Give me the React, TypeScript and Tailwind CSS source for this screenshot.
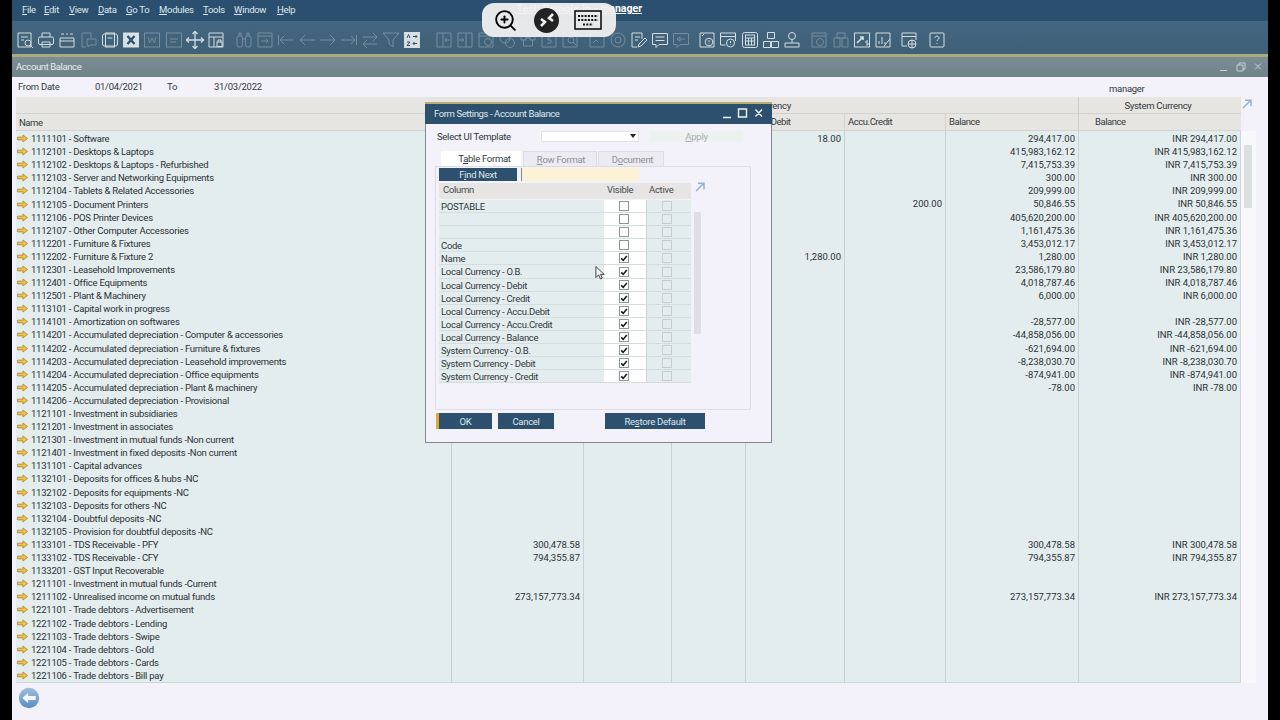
import React from "react";
import { ZoomIn } from "lucide-react";

type R = { n: string; d?: string; c?: string; b?: string; o?: string };
const rows: R[] = [
  { n: "1111101 - Software", d: "18.00", b: "294,417.00" },
  { n: "1112101 - Desktops & Laptops", b: "415,983,162.12" },
  { n: "1112102 - Desktops & Laptops - Refurbished", b: "7,415,753.39" },
  { n: "1112103 - Server and Networking Equipments", b: "300.00" },
  { n: "1112104 - Tablets & Related Accessories", b: "209,999.00" },
  { n: "1112105 - Document Printers", c: "200.00", b: "50,846.55" },
  { n: "1112106 - POS Printer Devices", b: "405,620,200.00" },
  { n: "1112107 - Other Computer Accessories", b: "1,161,475.36" },
  { n: "1112201 - Furniture & Fixtures", b: "3,453,012.17" },
  { n: "1112202 - Furniture & Fixture 2", d: "1,280.00", b: "1,280.00" },
  { n: "1112301 - Leasehold Improvements", b: "23,586,179.80" },
  { n: "1112401 - Office Equipments", b: "4,018,787.46" },
  { n: "1112501 - Plant & Machinery", b: "6,000.00" },
  { n: "1113101 - Capital work in progress" },
  { n: "1114101 - Amortization on softwares", b: "-28,577.00" },
  { n: "1114201 - Accumulated depreciation - Computer & accessories", b: "-44,858,056.00" },
  { n: "1114202 - Accumulated depreciation - Furniture & fixtures", b: "-621,694.00" },
  { n: "1114203 - Accumulated depreciation - Leasehold improvements", b: "-8,238,030.70" },
  { n: "1114204 - Accumulated depreciation - Office equipments", b: "-874,941.00" },
  { n: "1114205 - Accumulated depreciation - Plant & machinery", b: "-78.00" },
  { n: "1114206 - Accumulated depreciation - Provisional" },
  { n: "1121101 - Investment in subsidiaries" },
  { n: "1121201 - Investment in associates" },
  { n: "1121301 - Investment in mutual funds -Non current" },
  { n: "1121401 - Investment in fixed deposits -Non current" },
  { n: "1131101 - Capital advances" },
  { n: "1132101 - Deposits for offices & hubs -NC" },
  { n: "1132102 - Deposits for equipments -NC" },
  { n: "1132103 - Deposits for others -NC" },
  { n: "1132104 - Doubtful deposits -NC" },
  { n: "1132105 - Provision for doubtful deposits -NC" },
  { n: "1133101 - TDS Receivable - PFY", o: "300,478.58", b: "300,478.58" },
  { n: "1133102 - TDS Receivable - CFY", o: "794,355.87", b: "794,355.87" },
  { n: "1133201 - GST Input Recoverable" },
  { n: "1211101 - Investment in mutual funds -Current" },
  { n: "1211102 - Unrealised income on mutual funds", o: "273,157,773.34", b: "273,157,773.34" },
  { n: "1221101 - Trade debtors - Advertisement" },
  { n: "1221102 - Trade debtors - Lending" },
  { n: "1221103 - Trade debtors - Swipe" },
  { n: "1221104 - Trade debtors - Gold" },
  { n: "1221105 - Trade debtors - Cards" },
  { n: "1221106 - Trade debtors - Bill pay" },
];

const settings: [string, boolean][] = [
  ["POSTABLE", false],
  ["", false],
  ["", false],
  ["Code", false],
  ["Name", true],
  ["Local Currency - O.B.", true],
  ["Local Currency - Debit", true],
  ["Local Currency - Credit", true],
  ["Local Currency - Accu.Debit", true],
  ["Local Currency - Accu.Credit", true],
  ["Local Currency - Balance", true],
  ["System Currency - O.B.", true],
  ["System Currency - Debit", true],
  ["System Currency - Credit", true],
];

const cols = "grid grid-cols-[435px_132px_88px_74px_99px_101px_133px_163px]";

const glyphs: Record<string, React.ReactNode> = {
  preview: <><path d="M3 3h13v14H3z" /><path d="M6 7h7M6 10h3" /><circle cx="13" cy="13" r="3" /><path d="M15 15l3 3" /></>,
  print: <><path d="M6 7V3h8v4" /><rect x="2.5" y="7" width="15" height="7.5" rx="1.5" /><path d="M6 12h8v5H6z" /></>,
  cal: <><path d="M3 8h14v9H3z" /><path d="M3 11h14M4 4h3M13 4h3M9 4h2" /></>,
  chat: <><path d="M4 17V3h9v5M4 17h4" /><path d="M9 9h9v6h-6l-2 2v-2H9z" /></>,
  window: <><rect x="2.5" y="4" width="15" height="12" rx="2" /><rect x="5.5" y="3" width="9" height="14" /><path d="M7.5 8h5" /></>,
  excel: <><rect x="2.5" y="3" width="15" height="14" fill="#f4f7f8" /><path d="M6.5 6l7 8M13.5 6l-7 8" stroke="#2d4f66" strokeWidth="2.4" /></>,
  word: <><rect x="2.5" y="3" width="15" height="14" /><path d="M6 7l1.5 6 2.5-5 2.5 5L14 7" /></>,
  pdf: <><rect x="2.5" y="3" width="15" height="14" /><path d="M6 9h8M6 12h6" /></>,
  move: <><path d="M10 1.5v17M1.5 10h17" strokeWidth="1.3" /><path d="M7.5 4L10 1.5 12.5 4M7.5 16l2.5 2.5 2.5-2.5M4 7.5L1.5 10 4 12.5M16 7.5l2.500 2.500-2.500 2.500" strokeWidth="1.3" /></>,
  lock: <><path d="M3 3h14v14H3zM3 7h14M8 7v10" /><rect x="11" y="12" width="5" height="4.500" /><path d="M12 12v-2h3v2" /></>,
  binoc: <><rect x="3" y="6" width="5.500" height="11" rx="2" /><rect x="11.500" y="6" width="5.500" height="11" rx="2" /><path d="M8.500 9h3M5 6V3h2v3M13 6V3h2v3" /></>,
  import: <><path d="M3 3h14v14H3zM3 6h14" /><path d="M6 11h7M11 9l2 2-2 2" /></>,
  first: <><path d="M2.500 5v10M18 10H4M8 6l-4 4 4 4" /></>,
  prev: <><path d="M18 10H3M8 5l-5 5 5 5" /></>,
  next: <><path d="M2 10h15M12 5l5 5-5 5" /></>,
  last: <><path d="M17.500 5v10M2 10h14M12 6l4 4-4 4" /></>,
  swap: <><path d="M3 7h14M13 3l4 4-4 4" /><path d="M17 14H3M7 10l-4 4 4 4" /></>,
  filter: <><path d="M2 3h16l-6 7v7l-4-3v-4z" /></>,
  sort: <><rect x="2.500" y="2.500" width="15" height="15" fill="#f1f5f6" /><path d="M5 8l1.500-3.500L8 8M11 6.500h4M13.500 5l1.500 1.500-1.500 1.500M5 12h3l-3 3.500h3M15 13.500h-4M12.500 12L11 13.500l1.500 1.500" stroke="#2d4f66" /></>,
  out: <><path d="M3 3h14v14H3zM9 3v14" /><path d="M16 10h-5M13 8l-2 2 2 2" /></>,
  inn: <><path d="M3 3h14v14H3zM11 3v14" /><path d="M4 10h5M7 8l2 2-2 2" /></>,
  doc: <><path d="M3 3h14v14H3zM3 6h14" /><circle cx="12" cy="12" r="3.500" /></>,
  gear: <><circle cx="8" cy="8" r="5" /><circle cx="13" cy="13" r="4.500" /></>,
  org: <><path d="M3 6h5v4H3zM12 6h5v4h-5zM8 8h4M5.500 10v6h9v-6" /></>,
  dollar: <><path d="M3 3h14v14H3z" /><path d="M12 7H9v3h3v3H8" /></>,
  search: <><path d="M3 3h14v14H3z" /><circle cx="11" cy="10" r="3" /><path d="M13 12l3 3" /></>,
  chart: <><path d="M3 3h14v14H3z" /><path d="M6 13l3-3 2 2" /></>,
  stack: <><circle cx="10" cy="10" r="7" /><circle cx="10" cy="10" r="3" /></>,
  edit: <><path d="M3 17V3h10v6M3 17h5" /><path d="M6 7h5M6 10h3M9 17l1-3 6-6 2 2-6 6z" /></>,
  msg: <><path d="M2.500 3.500h15v11H9l-3 3v-3H2.500z" /><path d="M5.500 7h9M5.500 10.500h9" /></>,
  msg2: <><path d="M2.500 3.500h15v11H9l-3 3v-3H2.500z" /><path d="M6 9l3-2v4zM14 9h-5" /></>,
  alert: <><path d="M3 3h14v14H3z" /><path d="M5 6l2-2" /><circle cx="12" cy="12" r="3.800" /><path d="M12 10v2.200M12 13.500v.5" /></>,
  alert2: <><path d="M2.500 3h15v8M2.500 3v12h5M2.500 6.500h15" /><circle cx="12.500" cy="13" r="4" /><path d="M12.500 11v2.200M12.500 14.500v.5" /></>,
  calc: <><rect x="2.500" y="2.500" width="15" height="15" rx="2" /><rect x="5.500" y="5" width="9" height="10" /><path d="M5.500 8h9M5.500 11h9M8.500 8v7M11.500 8v7" /></>,
  tree: <><path d="M6.500 2.500h7v6h-7zM2.500 11.500h7v6h-7zM10.500 11.500h7v6h-7z" /></>,
  stamp: <><circle cx="10" cy="6" r="3.500" /><path d="M10 9.500V13M3 13h14v4H3z" /></>,
  gauge: <><path d="M3 3h14v14H3zM3 6h14" /><circle cx="11" cy="12" r="3.500" /></>,
  grid4: <><path d="M3 8h6v9H3zM11 8h6v9h-6zM6 3h8v5H6z" /></>,
  trend: <><rect x="2.500" y="3" width="15" height="14" /><path d="M5 13l6-6M8 7h3v3" strokeWidth="1.600" /><path d="M16 11h-2v2h2v2h-2" /></>,
  bars: <><path d="M3 3h14v14H3z" /><path d="M6 14v-3M9 14V7M12 14v-2M11 16l6-7" /></>,
  web: <><path d="M3 16V3h14v7M3 6.500h14M3 16h5" /><circle cx="13" cy="14" r="4" /><path d="M9 14h8M13 10v8" /></>,
  help: <><rect x="3" y="3" width="14" height="14" rx="1" /><path d="M8 8c0-2.500 4-2.500 4 0 0 1.500-2 1.500-2 3M10 13v1" /></>,
};

type Ic = [string, boolean];
const groups: { cls: string; items: Ic[] }[] = [
  { cls: "flex gap-[1.300px]", items: [["preview", true], ["print", true], ["cal", true], ["chat", false], ["window", true], ["excel", true], ["word", false], ["pdf", false], ["move", true], ["lock", true]] },
  { cls: "flex gap-[1px] ml-[8px]", items: [["binoc", false], ["import", false], ["first", false], ["prev", false], ["next", false], ["last", false], ["swap", false], ["filter", false], ["sort", true]] },
  { cls: "flex gap-[1px] ml-[12px]", items: [["out", false], ["inn", false], ["doc", false], ["gear", false], ["org", false], ["dollar", false], ["search", false]] },
  { cls: "flex gap-[1px] ml-[7px]", items: [["chart", false], ["stack", false], ["edit", true], ["msg", true], ["msg2", false]] },
  { cls: "flex gap-[1.300px] ml-[6px]", items: [["alert", true], ["alert2", true], ["calc", true], ["tree", true], ["stamp", true]] },
  { cls: "flex gap-[1.300px] ml-[7px]", items: [["gauge", false], ["grid4", false], ["trend", true], ["bars", true]] },
  { cls: "flex ml-[6px]", items: [["web", true]] },
  { cls: "flex ml-[8px]", items: [["help", true]] },
];

function ToolIcon({ g, on }: { g: string; on: boolean }) {
  return (
    <svg viewBox="0 0 20 20" fill="none" stroke="#eef3f5" strokeWidth="1" className={on ? "w-[20px] h-[20px] opacity-85" : "w-[20px] h-[20px] opacity-30"}>
      {glyphs[g]}
    </svg>
  );
}

function GoldArrow() {
  return (
    <svg viewBox="0 0 12 9" className="w-[11px] h-[9px] shrink-0">
      <path d="M0.500 3h6V0.600L11.500 4.500 6.500 8.400V6h-6z" fill="#efc04a" stroke="#a67f22" strokeWidth="0.800" />
    </svg>
  );
}

function ExpandArrow() {
  return (
    <svg viewBox="0 0 10 10" className="w-[10px] h-[10px]" fill="none" stroke="#8fb2d0" strokeWidth="1.500">
      <path d="M1 9L8.500 1.500M3 1.200h6v6" />
    </svg>
  );
}

function Cell({ v, last }: { v?: string; last?: boolean }) {
  return <div className={last ? "border-l border-[#c9d2d3] text-right pr-[4px] overflow-hidden tracking-normal" : "border-l border-[#c9d2d3] text-right pr-[3px] overflow-hidden tracking-normal"}>{v}</div>;
}

function U({ c, r }: { c: string; r: string }) {
  return <span><span className="underline">{c}</span>{r}</span>;
}

function Check({ on }: { on: boolean }) {
  return (
    <div className="w-[10px] h-[10px] border border-[#8f9698] bg-white flex items-center justify-center">
      {on && (
        <svg viewBox="0 0 10 10" className="w-[8px] h-[8px]" fill="none" stroke="#17191b" strokeWidth="2">
          <path d="M1.500 5.500L4 8l4.500-5.500" />
        </svg>
      )}
    </div>
  );
}

function Modal() {
  return (
    <div className="absolute left-[425px] top-[102px] w-[347px] h-[341px] bg-[#f3f1f9] border border-[#7d898c] border-t-0 flex flex-col text-[#30363a]">
      <div className="h-[2px] bg-[#b9ae72] -mx-px" />
      <div className="h-[20px] bg-[#2c506d] -mx-px flex items-center pl-[9px] pr-[9px] pb-[2px] text-[#dfe7ec] shrink-0">
        <span className="flex-1 tracking-[-0.4px]">Form Settings - Account Balance</span>
        <svg viewBox="0 0 42 12" className="w-[42px] h-[12px]" fill="none" stroke="#eef3f5" strokeWidth="1.400">
          <path d="M2 10.500h8M17.500 2h8v8h-8zM34.500 2.500l6.500 7M41 2.500l-6.500 7" />
        </svg>
      </div>
      <div className="h-[24px] flex items-center pl-[11px] shrink-0">
        <span className="w-[104px]">Select UI Template</span>
        <div className="w-[98px] h-[11px] bg-white border border-[#e1e1e6] flex items-center justify-end pr-[2px]">
          <div className="w-0 h-0 border-l-[3px] border-r-[3px] border-t-[4px] border-l-transparent border-r-transparent border-t-[#222]" />
        </div>
        <div className="ml-[11px] w-[93px] h-[11px] bg-[#edf1f0] flex items-center justify-center text-[#a9adb0]"><U c="A" r="pply" /></div>
      </div>
      <div className="flex h-[15px] ml-[15px] gap-[2px] shrink-0 mt-[3px]">
        <div className="w-[80px] bg-white flex items-center justify-center pl-[7px]"><span>T<span className="underline">a</span>ble Format</span></div>
        <div className="w-[74px] bg-[#ecebf1] border border-b-0 border-[#dcdce2] flex items-center justify-center text-[#8b9093] pl-[2px]"><U c="R" r="ow Format" /></div>
        <div className="w-[66px] -ml-[1px] bg-[#ecebf1] border border-b-0 border-[#dcdce2] flex items-center justify-center text-[#8b9093] pl-[3px]"><span>D<span className="underline">o</span>cument</span></div>
      </div>
      <div className="ml-[9px] w-[316px] h-[244px] border border-[#dcdce3] pl-[3px] pt-[1px] shrink-0">
        <div className="flex h-[13px] gap-[4px]">
          <div className="w-[78px] bg-[#2c506d] text-[#dfe7ec] flex items-center justify-center"><span>F<span className="underline">i</span>nd Next</span></div>
          <div className="w-[118px] bg-[#fcf3d6] border-l border-[#8a8a80]" />
        </div>
        <div className="flex mt-[2px] w-[270px]">
          <div className="w-[252px]">
            <div className="grid grid-cols-[165px_42px_45px] h-[16px] bg-[#e6e5e3] items-center text-[#454b4f] pb-[3px]">
              <div className="pl-[4px]">Column</div>
              <div className="pl-[3px]">Visible</div>
              <div className="pl-[3px]">Active</div>
            </div>
            <div className="pt-[1px]">
              {settings.map(([t, on], i) => (
                <div key={i} className="grid grid-cols-[165px_42px_45px] h-[13.100px] bg-[#e4edee] border-b border-[#d5dcdc]">
                  <div className="pl-[2px] leading-[13px] overflow-hidden">{t}</div>
                  <div className="bg-white flex items-center pl-[15px]"><Check on={on} /></div>
                  <div className="border-l border-[#c9d2d3] flex items-center pl-[15px]">
                    <div className="w-[10px] h-[10px] border border-[#c6cdce]" />
                  </div>
                </div>
              ))}
            </div>
          </div>
          <div className="ml-[3px] w-[15px] flex flex-col">
            <div className="mt-[-1px] ml-[1px]"><ExpandArrow /></div>
            <div className="mt-[20px] w-[7px] h-[122px] bg-[#dedfe4]" />
          </div>
        </div>
      </div>
      <div className="flex mt-[3px] ml-[10px] h-[16px] text-[#dfe7ec]">
        <div className="w-[56px] bg-[#2c506d] border-l-[3px] border-[#d9a93a] flex items-center justify-center">OK</div>
        <div className="ml-[6px] w-[56px] bg-[#2c506d] flex items-center justify-center">Cancel</div>
        <div className="ml-[51px] w-[100px] bg-[#2c506d] flex items-center justify-center"><span>Re<span className="underline">s</span>tore Default</span></div>
      </div>
    </div>
  );
}

export default function App() {
  return (
    <div className="relative w-[1280px] h-[720px] overflow-hidden bg-black flex text-[9.500px] leading-[13px] tracking-[-0.28px]" style={{ fontFamily: 'Roboto, "Noto Sans", sans-serif' }}>
      <div className="ml-[12px] w-[1256px] h-full flex flex-col bg-[#f3f1fa] text-[#33393d]">
        <div className="h-[21px] bg-[#2b506f] flex items-center pl-[10px] pb-[3px] text-[#dfe7ec] shrink-0 relative">
          <div className="w-[22px]"><U c="F" r="ile" /></div>
          <div className="w-[25px]"><U c="E" r="dit" /></div>
          <div className="w-[29px]"><U c="V" r="iew" /></div>
          <div className="w-[28px]"><U c="D" r="ata" /></div>
          <div className="w-[33px]"><U c="G" r="o To" /></div>
          <div className="w-[44px]"><U c="M" r="odules" /></div>
          <div className="w-[31px]"><U c="T" r="ools" /></div>
          <div className="w-[43px]"><U c="W" r="indow" /></div>
          <div><U c="H" r="elp" /></div>
          <span className="absolute right-[626px] top-[2px] text-[10.500px] tracking-normal font-bold text-white underline whitespace-nowrap">Test: Remote In - manager</span>
        </div>
        <div className="h-[33px] bg-gradient-to-b from-[#436681] to-[#3f6075] flex items-center pl-[2.500px] pt-[5px] shrink-0">
          {groups.map((g, i) => (
            <div key={i} className={g.cls}>
              {g.items.map(([n, on], j) => <ToolIcon key={j} g={n} on={on} />)}
            </div>
          ))}
        </div>
        <div className="h-[3px] bg-[#aca97f] shrink-0" />
        <div className="h-[20px] bg-gradient-to-b from-[#7b8e95] to-[#6f8389] flex items-center pl-[4px] pr-[6px] pb-[1px] text-[#e6ecee] shrink-0">
          <span className="flex-1 tracking-[-0.4px]">Account Balance</span>
          <svg viewBox="0 0 42 10" className="w-[42px] h-[10px]" fill="none" stroke="#c4d0d4" strokeWidth="1">
            <path d="M0 8.500h7M17 3h6v6h-6zM19 3V1h6v6h-2M35 1.500l6 6M41 1.500l-6 6" />
          </svg>
        </div>
        <div className="h-[20px] flex items-center pl-[6px] pb-[1px] shrink-0 relative">
          <span className="w-[77px]">From Date</span>
          <span className="w-[72px]">01/04/2021</span>
          <span className="w-[47px]">To</span>
          <span>31/03/2022</span>
          <span className="absolute left-[1097px] top-[5px]">manager</span>
        </div>
        <div className="flex flex-1 min-h-0 pl-[4px]">
          <div className="w-[1225px] flex flex-col">
            <div className="h-[17px] bg-[#e6e5e2] grid grid-cols-[627px_163px] pl-[435px] border-b border-[#d2d3d0] shrink-0 items-center">
              <div className="text-center pr-[6px]">Local Currency</div>
              <div className="text-center border-l border-[#c9d2d3] h-full leading-[17px] pr-[4px]">System Currency</div>
            </div>
            <div className={cols + " h-[17px] bg-[#e6e5e2] border-b border-[#d2d3d0] shrink-0 items-center tracking-[-0.45px]"}>
              {["Name", "", "", "", "Accu.Debit", "Accu.Credit", "Balance", "Balance"].map((h, i) => (
                <div key={i} className={i === 0 ? "pl-[3px]" : i === 7 ? "pl-[16px] h-full leading-[16px] border-l border-[#d2d3d0]" : "pl-[3px] h-full leading-[16px] border-l border-[#d2d3d0]"}>{h}</div>
              ))}
            </div>
            <div className="h-[552px] bg-[#e4edee] border-b border-[#cfd6d8] border-r overflow-hidden shrink-0">
              <div className={cols + " h-[1px]"}>
                <div /><Cell /><Cell /><Cell /><Cell /><Cell /><Cell /><Cell />
              </div>
              {rows.map((r) => (
                <div key={r.n} className={cols + " h-[13.100px] leading-[13px] text-[#2b3034]"}>
                  <div className="flex items-center gap-[3px] pl-[1px] whitespace-nowrap tracking-[-0.24px]"><GoldArrow /><span>{r.n}</span></div>
                  <Cell v={r.o} />
                  <Cell />
                  <Cell />
                  <Cell v={r.d} />
                  <Cell v={r.c} />
                  <Cell v={r.b} />
                  <Cell v={r.b ? "INR " + r.b : undefined} last />
                </div>
              ))}
            </div>
            <div className="flex-1 flex items-center pl-[2px]">
              <svg viewBox="0 0 26 26" className="w-[22px] h-[22px] mt-[-7px]">
                <defs>
                  <linearGradient id="bk" x1="0" y1="0" x2="0" y2="1">
                    <stop offset="0" stopColor="#9dbedd" />
                    <stop offset="1" stopColor="#5b8ec0" />
                  </linearGradient>
                </defs>
                <circle cx="13" cy="13" r="12" fill="url(#bk)" />
                <path d="M5 13l7-6v3.500h9v5h-9V19z" fill="#f4f7fa" />
              </svg>
            </div>
          </div>
          <div className="w-[15px] flex flex-col">
            <div className="h-[34px] pt-[2px] pl-[1px]"><ExpandArrow /></div>
            <div className="h-[552px] bg-[#f8f7fc] pl-[3px] pt-[14px]">
              <div className="w-[8px] h-[63px] bg-[#dcdfe1]" />
            </div>
          </div>
        </div>
      </div>

      <Modal />

      <svg viewBox="0 0 12 16" className="absolute left-[595px] top-[265px] w-[11px] h-[16px]">
        <path d="M1 1v12l3-3 2 4.500 2-1L6 9.500h4z" fill="#f4f4f4" stroke="#333" strokeWidth="1" />
      </svg>

      <div className="absolute left-[482px] top-[3px] w-[134px] h-[34px] rounded-[12px] bg-[#efefef]/95 flex items-center pl-[11px] text-black">
        <ZoomIn className="w-[25px] h-[25px]" strokeWidth={1.800} />
        <div className="ml-[16px] w-[25px] h-[25px] rounded-full bg-[#222] flex items-center justify-center">
          <svg viewBox="0 0 20 20" className="w-[20px] h-[20px]" fill="none" stroke="#f2f2f2" strokeWidth="2.500">
            <path d="M4 9l4 3-4 4M16 4l-4 4 4 3" />
          </svg>
        </div>
        <svg viewBox="0 0 28 20" className="ml-[15px] w-[28px] h-[20px]" fill="none" stroke="#111" strokeWidth="1.600">
          <rect x="1" y="1" width="26" height="18" />
          <path d="M4 6h20M4 10h20M9 14.500h10" strokeDasharray="2 1.300" strokeWidth="2.200" />
        </svg>
      </div>
    </div>
  );
}
